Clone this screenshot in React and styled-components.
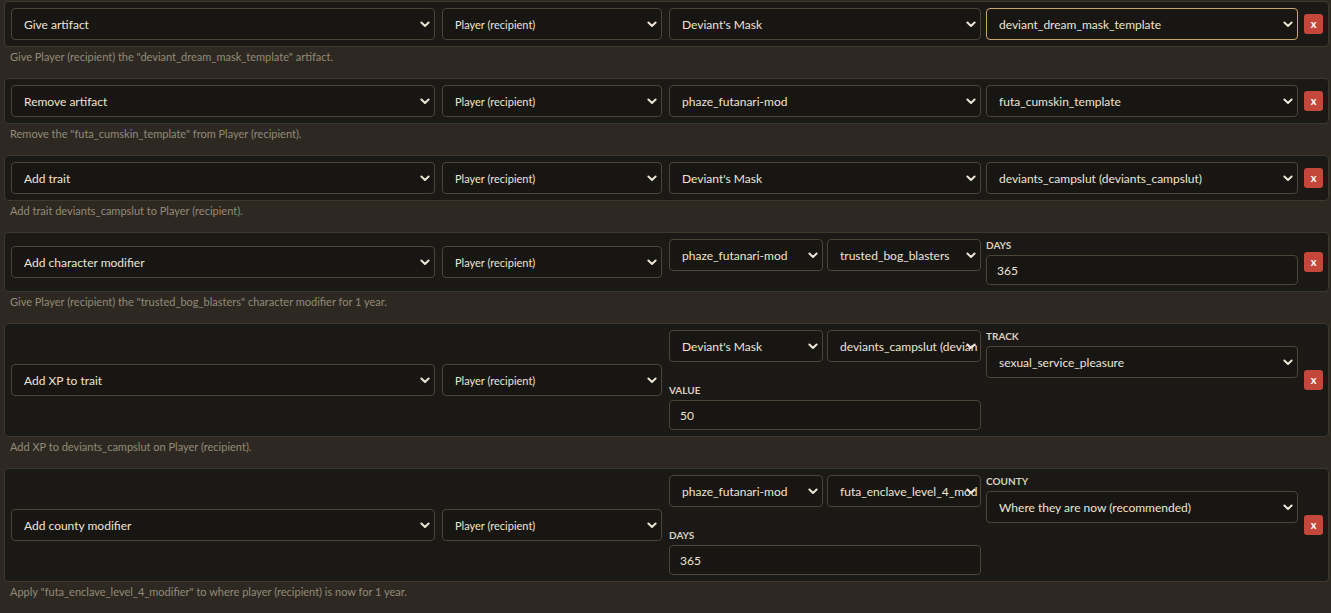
import React from 'react';
import styled, { createGlobalStyle } from 'styled-components';

const GlobalStyle = createGlobalStyle`
  html, body {
    margin: 0;
    background: #2d2922;
    overflow: hidden;
  }
  body {
    font-family: Lato, "Open Sans", sans-serif;
  }
`;

const Page = styled.div`
  padding: 1px 2px 0 4px;
`;

const Block = styled.div`
  margin-bottom: 14px;
`;

const Card = styled.div`
  display: flex;
  align-items: center;
  gap: 7px;
  background: #1b1915;
  border: 1px solid #3d392f;
  border-radius: 4px;
  padding: 6px 5px 6px 6px;
`;

const Description = styled.div`
  margin: 3px 0 0 6px;
  font-size: 11px;
  line-height: 14px;
  color: #948a77;
`;

const SelectWrap = styled.div`
  position: relative;
  width: ${p => p.$width ? `${p.$width}px` : 'auto'};
  flex: ${p => p.$width ? 'none' : '1'};
  min-width: 0;
`;

const NativeSelect = styled.select`
  appearance: none;
  -webkit-appearance: none;
  display: block;
  width: 100%;
  height: 32px;
  box-sizing: border-box;
  padding: 0 2px 0 12px;
  background: #181612;
  border: 1px solid ${p => p.$focused ? '#c7a86c' : '#4a4538'};
  border-radius: 4px;
  color: #ebe4d4;
  font-family: Lato, "Open Sans", sans-serif;
  font-size: ${p => p.$small ? '11px' : '12px'};
  outline: none;
  white-space: nowrap;
  overflow: hidden;
  text-overflow: clip;
`;

const Chevron = styled.svg`
  position: absolute;
  right: 5px;
  top: 50%;
  margin-top: -3px;
  width: 10px;
  height: 7px;
  pointer-events: none;
`;

const TextInput = styled.input`
  display: block;
  width: 100%;
  height: 30px;
  box-sizing: border-box;
  padding: 0 10px;
  background: #181612;
  border: 1px solid #4a4538;
  border-radius: 4px;
  color: #ebe4d4;
  font-family: Lato, "Open Sans", sans-serif;
  font-size: 12px;
  outline: none;
`;

const Params = styled.div`
  flex: 1;
  display: grid;
  grid-template-columns: 1fr 1fr;
  column-gap: 5px;
  row-gap: 6px;
  align-items: start;
  min-width: 0;
`;

const Pair = styled.div`
  display: grid;
  grid-template-columns: 1fr 1fr;
  gap: 4px;
  min-width: 0;
`;

const Field = styled.div`
  display: flex;
  flex-direction: column;
  min-width: 0;
`;

const Label = styled.label`
  font-size: 10px;
  line-height: 12px;
  font-weight: 700;
  text-transform: uppercase;
  color: #d8d0bf;
  margin-bottom: 4px;
`;

const DeleteButton = styled.button`
  flex: none;
  width: 19px;
  height: 20px;
  margin-left: -1px;
  padding: 0;
  border: none;
  border-radius: 3px;
  background: #c4473b;
  color: #fff;
  font-family: Lato, sans-serif;
  font-size: 11px;
  font-weight: 700;
  line-height: 20px;
  cursor: pointer;
`;

const Select = ({ value, width, focused, small }) => (
  <SelectWrap $width={width}>
    <NativeSelect $focused={focused} $small={small} defaultValue={value}>
      <option>{value}</option>
    </NativeSelect>
    <Chevron viewBox="0 0 10 7">
      <path d="M1.4 1.5 L5 5 L8.6 1.5" fill="none" stroke="#ebe4d4" strokeWidth="2" strokeLinecap="round" strokeLinejoin="round" />
    </Chevron>
  </SelectWrap>
);

const renderParam = (p, i) => {
  if (p.kind === 'pair') {
    return (
      <Pair key={i}>
        <Select value={p.values[0]} />
        <Select value={p.values[1]} />
      </Pair>
    );
  }
  if (p.kind === 'field') {
    return (
      <Field key={i}>
        <Label>{p.label}</Label>
        {p.input ? <TextInput defaultValue={p.value} /> : <Select value={p.value} />}
      </Field>
    );
  }
  return <Select key={i} value={p.value} focused={p.focused} />;
};

const effects = [
  {
    type: 'Give artifact',
    params: [
      { kind: 'select', value: "Deviant's Mask" },
      { kind: 'select', value: 'deviant_dream_mask_template', focused: true },
    ],
    desc: 'Give Player (recipient) the "deviant_dream_mask_template" artifact.',
  },
  {
    type: 'Remove artifact',
    params: [
      { kind: 'select', value: 'phaze_futanari-mod' },
      { kind: 'select', value: 'futa_cumskin_template' },
    ],
    desc: 'Remove the "futa_cumskin_template" from Player (recipient).',
  },
  {
    type: 'Add trait',
    params: [
      { kind: 'select', value: "Deviant's Mask" },
      { kind: 'select', value: 'deviants_campslut (deviants_campslut)' },
    ],
    desc: 'Add trait deviants_campslut to Player (recipient).',
  },
  {
    type: 'Add character modifier',
    params: [
      { kind: 'pair', values: ['phaze_futanari-mod', 'trusted_bog_blasters'] },
      { kind: 'field', label: 'Days', input: true, value: '365' },
    ],
    desc: 'Give Player (recipient) the "trusted_bog_blasters" character modifier for 1 year.',
  },
  {
    type: 'Add XP to trait',
    params: [
      { kind: 'pair', values: ["Deviant's Mask", 'deviants_campslut (deviants_campslut)'] },
      { kind: 'field', label: 'Track', value: 'sexual_service_pleasure' },
      { kind: 'field', label: 'Value', input: true, value: '50' },
    ],
    desc: 'Add XP to deviants_campslut on Player (recipient).',
  },
  {
    type: 'Add county modifier',
    params: [
      { kind: 'pair', values: ['phaze_futanari-mod', 'futa_enclave_level_4_modifier'] },
      { kind: 'field', label: 'County', value: 'Where they are now (recommended)' },
      { kind: 'field', label: 'Days', input: true, value: '365' },
    ],
    desc: 'Apply "futa_enclave_level_4_modifier" to where player (recipient) is now for 1 year.',
  },
];

export default function App() {
  return (
    <>
      <GlobalStyle />
      <Page>
        {effects.map((e, i) => (
          <Block key={i}>
            <Card>
              <Select value={e.type} width={424} />
              <Select value="Player (recipient)" width={220} small />
              <Params>{e.params.map(renderParam)}</Params>
              <DeleteButton>x</DeleteButton>
            </Card>
            <Description>{e.desc}</Description>
          </Block>
        ))}
      </Page>
    </>
  );
}
